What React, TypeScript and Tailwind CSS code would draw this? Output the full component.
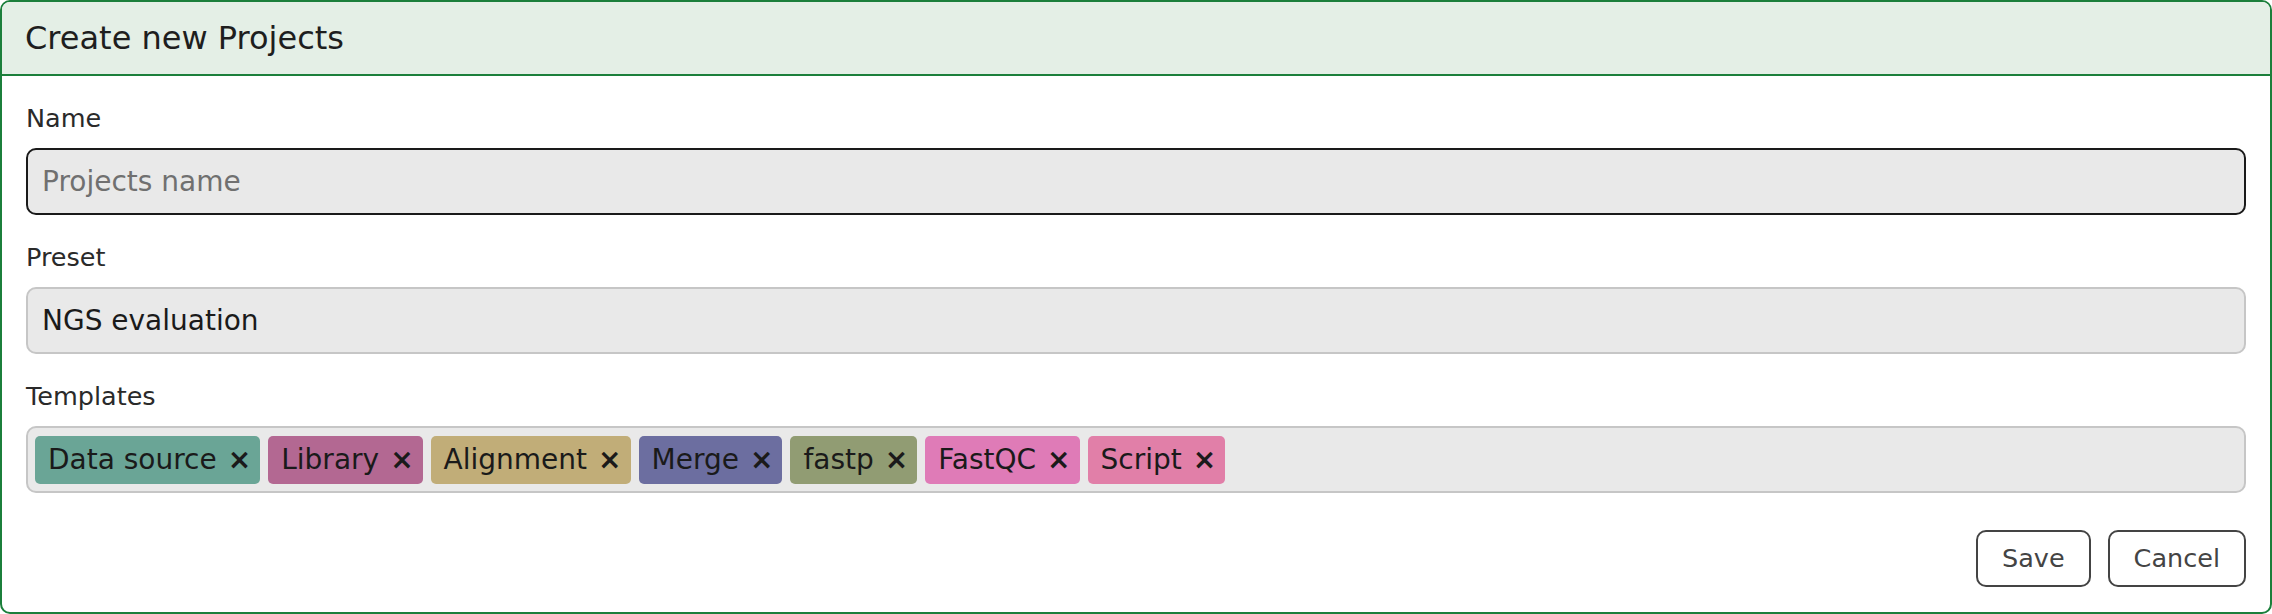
import React from "react";

const chips: { label: string; color: string }[] = [
  { label: "Data source", color: "bg-[#6aa596]" },
  { label: "Library", color: "bg-[#b36892]" },
  { label: "Alignment", color: "bg-[#c1ad78]" },
  { label: "Merge", color: "bg-[#6c6ea0]" },
  { label: "fastp", color: "bg-[#919c73]" },
  { label: "FastQC", color: "bg-[#df7bb7]" },
  { label: "Script", color: "bg-[#e17fa8]" },
];

export default function App() {
  return (
    <div
      className="w-[2272px] h-[614px] box-border border-2 border-[#1b7f3b] rounded-[10px] overflow-hidden bg-white flex flex-col"
      style={{ fontFamily: '"DejaVu Sans", Verdana, sans-serif' }}
    >
      <div className="h-[74px] shrink-0 box-border border-b-2 border-[#1b7f3b] bg-[#e4efe6] flex items-center pl-[23px]">
        <span className="text-[32px] text-[#1e1e1e] leading-none">Create new Projects</span>
      </div>
      <div className="flex flex-col px-[24px] pt-[28px] pb-[25px]">
        <div className="flex flex-col gap-[28px]">
          <div className="flex flex-col">
            <label className="text-[25.5px] leading-[29px] text-[#2a2a2a] mb-[15px]">Name</label>
            <div className="h-[67px] box-border border-2 border-[#1a1a1a] rounded-[10px] bg-[#e9e9e9] flex items-center pl-[14px]">
              <span className="text-[28px] text-[#707070]">Projects name</span>
            </div>
          </div>
          <div className="flex flex-col">
            <label className="text-[25.5px] leading-[29px] text-[#2a2a2a] mb-[15px]">Preset</label>
            <div className="h-[67px] box-border border-2 border-[#c6c6c6] rounded-[10px] bg-[#e9e9e9] flex items-center pl-[14px]">
              <span className="text-[28px] text-[#1a1a1a]">NGS evaluation</span>
            </div>
          </div>
          <div className="flex flex-col">
            <label className="text-[25.5px] leading-[29px] text-[#2a2a2a] mb-[15px]">Templates</label>
            <div className="h-[67px] box-border border-2 border-[#c6c6c6] rounded-[10px] bg-[#e9e9e9] flex items-center px-[7px] gap-[8px]">
              {chips.map((c) => (
                <div
                  key={c.label}
                  className={`h-[48px] rounded-[5px] flex items-center pl-[13px] pr-[9px] ${c.color}`}
                >
                  <span className="text-[28px] text-[#1a1a1a] whitespace-nowrap">{c.label}</span>
                  <span className="text-[28px] text-[#1a1a1a] ml-[11px] font-bold">×</span>
                </div>
              ))}
            </div>
          </div>
        </div>
        <div className="flex justify-end gap-[17px] mt-[37px]">
          <button className="h-[57px] box-border border-2 border-[#444444] rounded-[10px] bg-white px-[24px] text-[25.5px] text-[#444444]">
            Save
          </button>
          <button className="h-[57px] box-border border-2 border-[#444444] rounded-[10px] bg-white px-[24px] text-[25.5px] text-[#444444]">
            Cancel
          </button>
        </div>
      </div>
    </div>
  );
}
